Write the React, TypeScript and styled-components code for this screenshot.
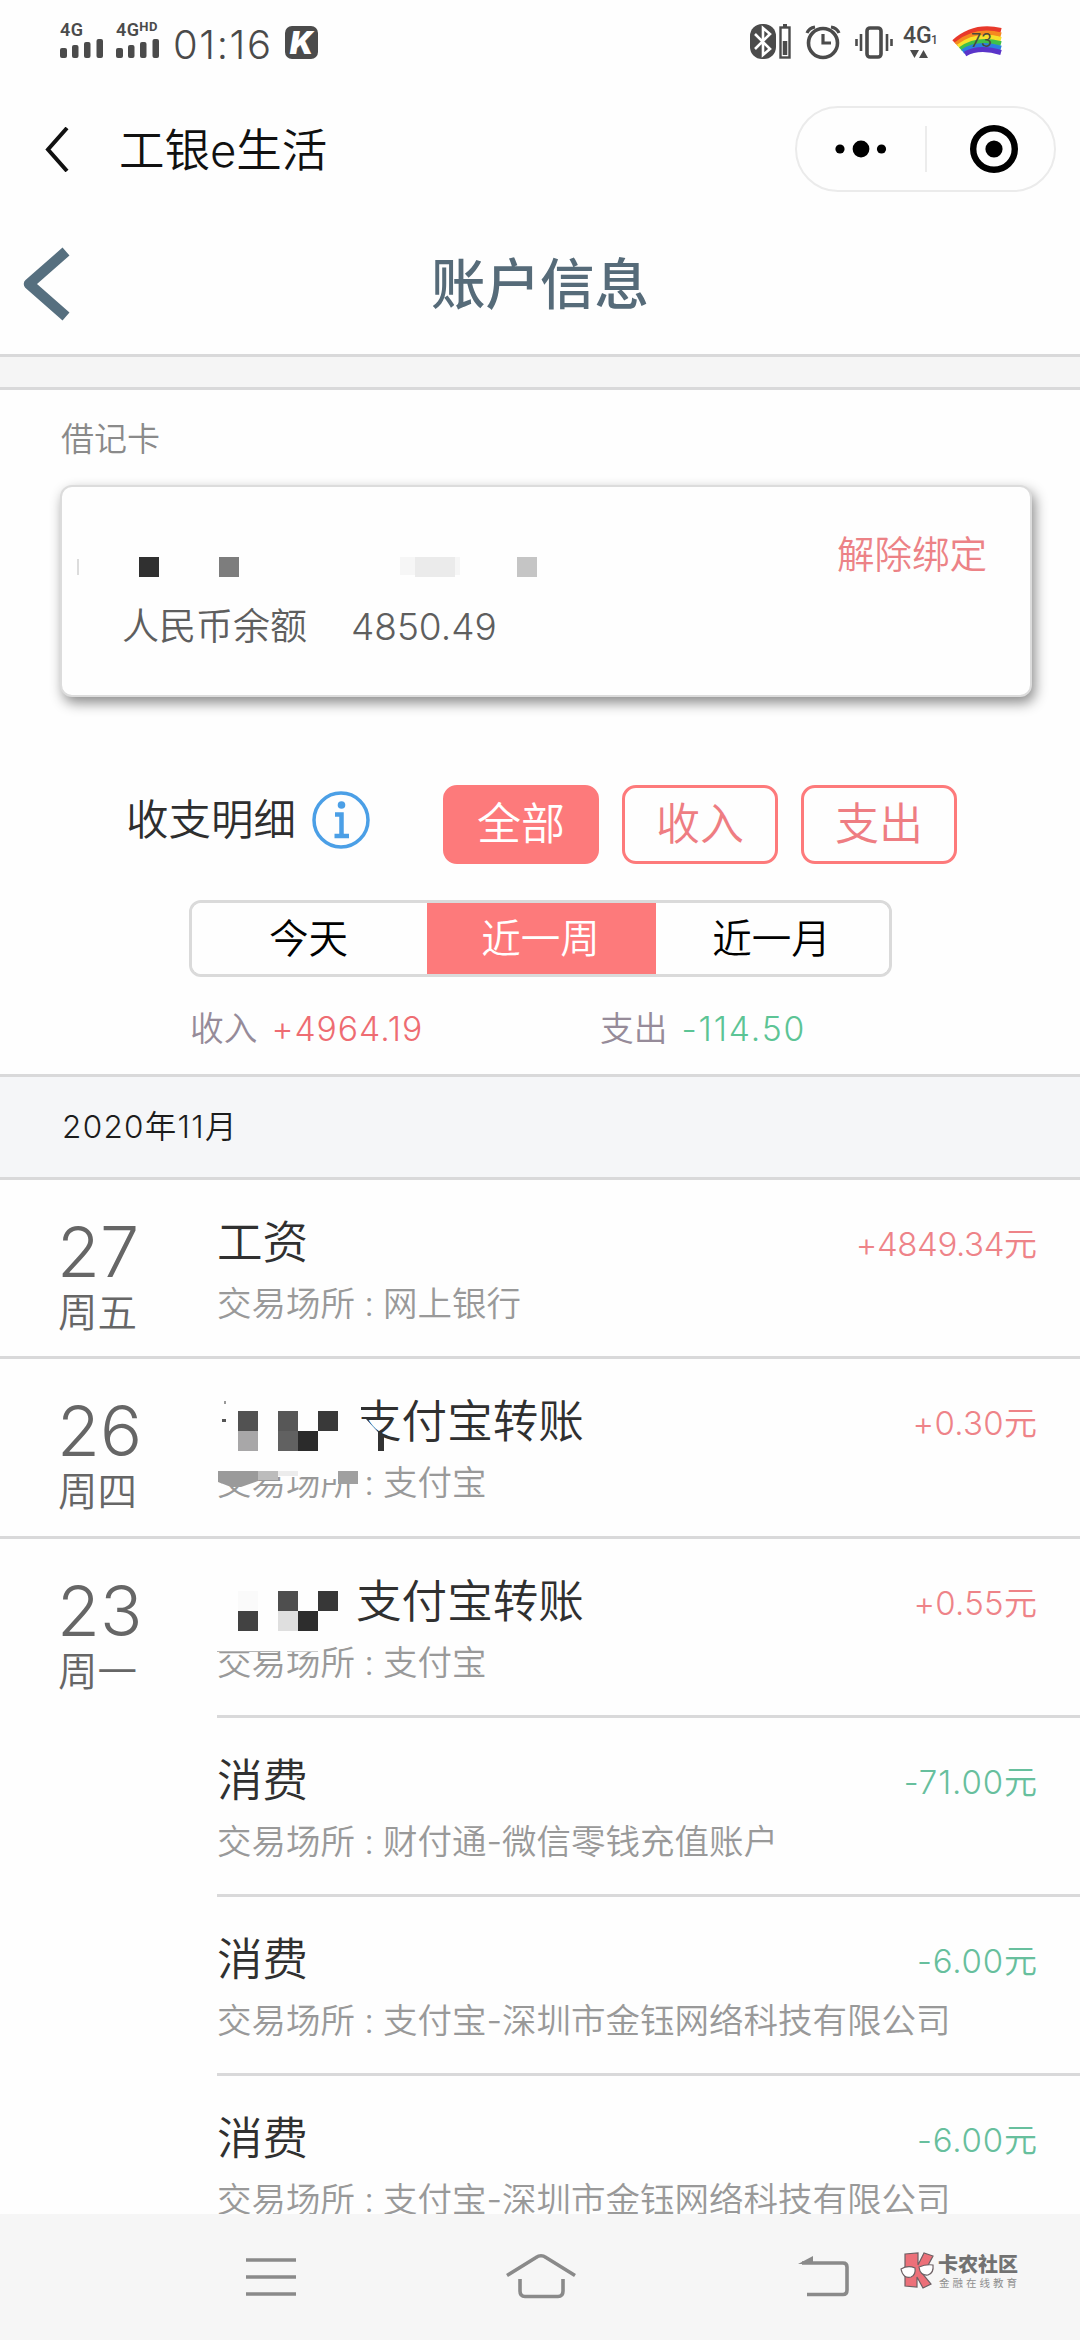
import React from "react";
import styled, { createGlobalStyle } from "styled-components";

const CORAL = "#fd7a7b";
const GREEN = "#5cc495";
const LINE = "#d9d9da";

const GlobalStyle = createGlobalStyle`
  * { box-sizing: border-box; }
  body {
    margin: 0;
    background: #fefefe;
    font-family: Inter, "Noto Sans CJK SC", sans-serif;
    font-weight: 350;
  }
`;

const Screen = styled.div`
  width: 1080px;
  height: 2340px;
  overflow: hidden;
  display: flex;
  flex-direction: column;
  background: #fefefe;
  white-space: nowrap;
`;

const StatusBar = styled.header`
  height: 80px;
  flex: none;
  display: flex;
  justify-content: space-between;
  padding: 20px 76px 0 60px;
`;

const StatusGroup = styled.div`
  display: flex;
  height: 42px;
`;

const SignalBox = styled.div<{ $w: number }>`
  width: ${(p) => p.$w}px;
  display: flex;
  flex-direction: column;
  color: #4b4b4b;
  font: 600 18px/19px Roboto, sans-serif;
  letter-spacing: 0.4px;
`;

const NetLabel = styled.span`
  display: flex;
  align-items: flex-start;
`;

const Hd = styled.span`
  font-size: 13px;
  line-height: 14px;
  font-weight: 700;
`;

const Clock = styled.span`
  font: 350 40px/50px Inter, sans-serif;
  color: #4a4a4a;
  width: 112px;
  letter-spacing: 1.6px;
`;

const AppBadge = styled.span`
  width: 33px;
  height: 33px;
  margin-top: 6px;
  border-radius: 7px;
  background: #4b4b4b;
  color: #fff;
  font: italic 900 31px/33px Inter, sans-serif;
  text-align: center;
`;

const MiniBar = styled.div`
  height: 142px;
  flex: none;
  display: flex;
  align-items: flex-start;
  padding: 26px 24px 0 45px;
`;

const MiniTitle = styled.h1`
  margin: 15px 0 0 50px;
  flex: 1;
  font-size: 45.5px;
  line-height: 60px;
  font-weight: 350;
  color: #111;
`;

const BackChevron = styled.svg`
  margin-top: 21px;
`;

const Capsule = styled.div`
  width: 261px;
  height: 86px;
  border: 2px solid #ebebeb;
  border-radius: 43px;
  display: flex;
  align-items: center;
`;

const CapsuleHalf = styled.div`
  flex: 1;
  display: flex;
  justify-content: center;
`;

const CloseIcon = styled.svg`
  margin-left: 7px;
`;

const CapsuleRule = styled.div`
  width: 2px;
  height: 46px;
  background: #ececec;
`;

const PageHeader = styled.div`
  height: 135px;
  flex: none;
  display: grid;
  grid-template-columns: 100px 1fr 100px;
  padding-top: 24px;
  border-bottom: 3px solid ${LINE};
`;

const PageTitle = styled.h2`
  margin: 0;
  text-align: center;
  color: #566b79;
  font-size: 54.5px;
  line-height: 76px;
  font-weight: 500;
`;

const PageBack = styled.svg`
  margin: 0 0 0 19px;
`;

const Spacer = styled.div`
  height: 33px;
  flex: none;
  background: #f5f5f5;
  border-bottom: 3px solid ${LINE};
`;

const Account = styled.section`
  flex: none;
  height: 394px;
  padding: 25px 48px 0 60px;
`;

const AccountType = styled.div`
  padding-left: 1px;
  font-size: 33px;
  line-height: 48px;
  color: #8a8a8a;
`;

const Card = styled.div`
  margin-top: 22px;
  height: 212px;
  border-radius: 12px;
  background: #fefefe;
  border: 2px solid #dcdcdc;
  box-shadow: 3px 6px 13px rgba(0, 0, 0, 0.45);
  display: flex;
  justify-content: space-between;
  padding: 0 43px 0 15px;
`;

const CardInfo = styled.div`
  display: flex;
  flex-direction: column;
`;

const CardNumber = styled.svg`
  margin-top: 65px;
`;

const Balance = styled.div`
  display: flex;
  gap: 44px;
  margin: 20px 0 0 45px;
  font-size: 37px;
  line-height: 50px;
  color: #5e5e5e;
`;

const Unbind = styled.span`
  margin-top: 43px;
  height: 50px;
  font-size: 37.5px;
  line-height: 50px;
  color: #ec8286;
`;

const Filters = styled.section`
  flex: none;
  height: 290px;
  display: flex;
  flex-direction: column;
`;

const KindRow = styled.div`
  height: 80px;
  display: flex;
  align-items: center;
  padding-left: 126px;
`;

const KindLabel = styled.span`
  width: 186px;
  font-size: 42.5px;
  line-height: 60px;
  margin-top: -8px;
  color: #2e2e2e;
`;

const InfoIcon = styled.svg`
  margin: -8px 73px 0 0;
`;

const KindGroup = styled.div`
  display: flex;
  gap: 23px;
`;

const KindButton = styled.button<{ $on?: boolean }>`
  width: 156px;
  height: 79px;
  padding: 0;
  border: 3px solid ${CORAL};
  border-radius: 14px;
  background: ${(p) => (p.$on ? CORAL : "#fefefe")};
  color: ${(p) => (p.$on ? "#fff" : "#ee7d82")};
  font: inherit;
  font-size: 44px;
  line-height: 73px;
`;

const RangeTabs = styled.div`
  margin: 36px 0 0 189px;
  width: 703px;
  height: 77px;
  display: grid;
  grid-template-columns: 235px 229px 1fr;
  border: 3px solid #dadada;
  border-radius: 12px;
  overflow: hidden;
`;

const RangeTab = styled.button<{ $on?: boolean }>`
  border: 0;
  padding: 0 2px 0 0;
  background: ${(p) => (p.$on ? CORAL : "#fefefe")};
  color: ${(p) => (p.$on ? "#fff" : "#000")};
  font: inherit;
  font-size: 39.5px;
  line-height: 70px;
`;

const Totals = styled.div`
  display: grid;
  grid-template-columns: 410px 1fr;
  margin: 27px 0 0 190px;
  font-size: 33.7px;
  line-height: 50px;
  color: #968b99;
`;

const Total = styled.span`
  display: flex;
  gap: 14px;
`;

const Figure = styled.span<{ $color: string; $track: number }>`
  color: ${(p) => p.$color};
  letter-spacing: ${(p) => p.$track}px;
`;

const MonthBar = styled.div`
  flex: none;
  height: 106px;
  padding: 25px 0 0 62px;
  border: solid ${LINE};
  border-width: 3px 0;
  background: #f5f6f8;
  font-size: 31.5px;
  line-height: 50px;
  letter-spacing: 1.3px;
  color: #1c1c1c;
`;

const History = styled.main`
  flex: 1;
  min-height: 0;
  overflow: hidden;
`;

const Day = styled.section`
  display: grid;
  grid-template-columns: 217px minmax(0, 1fr);
  border-bottom: 3px solid ${LINE};
`;

const DateCell = styled.div`
  padding: 37px 0 0 57px;
  color: #666;
`;

const DayNumber = styled.div`
  font-size: 70px;
  line-height: 70px;
  font-weight: 300;
`;

const Weekday = styled.div`
  font-size: 39.5px;
  line-height: 52px;
  padding-left: 1px;
`;

const Entry = styled.article`
  position: relative;
  height: 179.3px;
  display: flex;
  padding: 33px 43px 0 0;
  border-bottom: 3px solid ${LINE};
  &:last-child {
    height: 176.3px;
    border-bottom: 0;
  }
`;

const EntryText = styled.div`
  flex: 1;
  min-width: 0;
`;

const EntryTitle = styled.div<{ $indent?: number }>`
  padding-left: ${(p) => p.$indent ?? 0}px;
  font-size: 45.6px;
  line-height: 60px;
  color: #303030;
`;

const Place = styled.div`
  margin-top: 6px;
  font-size: 34.5px;
  line-height: 50px;
  color: #999;
`;

const Colon = styled.span`
  display: inline-block;
  width: 28px;
  text-align: center;
`;

const Amount = styled.div<{ $in: boolean; $track: number }>`
  flex: none;
  margin-top: 6px;
  font-size: 33px;
  line-height: 50px;
  height: 50px;
  color: ${(p) => (p.$in ? "#ee8388" : "#67bf9d")};
  letter-spacing: ${(p) => p.$track}px;
  margin-right: ${(p) => -p.$track}px;
`;

const Mosaic = styled.svg`
  position: absolute;
  left: 0;
  top: 30px;
`;

const SystemNav = styled.nav`
  flex: none;
  height: 126px;
  display: flex;
  align-items: flex-start;
  background: #f6f6f6;
  padding: 38px 61px 0 244px;
`;

const NavIcon = styled.svg<{ $gap: number }>`
  flex: none;
  margin-right: ${(p) => p.$gap}px;
`;

const Brand = styled.div`
  display: flex;
  gap: 3px;
`;

const BrandName = styled.div`
  font: 900 20px/24px "Noto Sans CJK SC", sans-serif;
  color: #727272;
`;

const BrandSub = styled.div`
  font: 400 10.5px/13px "Noto Sans CJK SC", sans-serif;
  letter-spacing: 3px;
  color: #8f8f8f;
  padding-left: 1px;
`;

type Block = [number, number, number, number, string];

type Item = {
  title: string;
  place: string;
  amount: string;
  track: number;
  mosaic?: "first" | "second";
};

const days: { day: string; week: string; items: Item[] }[] = [
  {
    day: "27",
    week: "周五",
    items: [{ title: "工资", place: "网上银行", amount: "+4849.34元", track: -0.4 }],
  },
  {
    day: "26",
    week: "周四",
    items: [{ title: "支付宝转账", place: "支付宝", amount: "+0.30元", track: 0.3, mosaic: "first" }],
  },
  {
    day: "23",
    week: "周一",
    items: [
      { title: "支付宝转账", place: "支付宝", amount: "+0.55元", track: 0.3, mosaic: "second" },
      { title: "消费", place: "财付通-微信零钱充值账户", amount: "-71.00元", track: 0.9 },
      { title: "消费", place: "支付宝-深圳市金钰网络科技有限公司", amount: "-6.00元", track: 0.8 },
      { title: "消费", place: "支付宝-深圳市金钰网络科技有限公司", amount: "-6.00元", track: 0.8 },
    ],
  },
];

const mosaicBlocks: Record<"first" | "second", Block[]> = {
  first: [
    [21, 22, 20, 20, "#525252"],
    [21, 42, 20, 20, "#a8a7a8"],
    [61, 22, 20, 20, "#575757"],
    [61, 42, 20, 20, "#616161"],
    [81, 42, 20, 20, "#2b2b2b"],
    [101, 22, 20, 20, "#393939"],
    [5, 30, 4, 3, "#555"],
    [7, 12, 2, 3, "#999"],
    [0, 74, 110, 14, "#fefefe"],
    [105, 74, 40, 16, "#fefefe"],
    [41, 82, 20, 9, "#bcbcbc"],
    [61, 82, 20, 5, "#ececec"],
    [121, 82, 20, 13, "#a0a0a0"],
  ],
  second: [
    [21, 22, 20, 20, "#fafafa"],
    [21, 42, 20, 20, "#424242"],
    [61, 22, 20, 20, "#4e4e4e"],
    [61, 42, 20, 20, "#dfdfdf"],
    [81, 42, 20, 20, "#2d2d2d"],
    [101, 22, 20, 20, "#373737"],
    [0, 72, 101, 10, "#fefefe"],
    [0, 82, 62, 1, "#b5b5b5"],
    [70, 82, 31, 1, "#ccc"],
  ],
};

const Bars = () => (
  <svg width="44" height="20" fill="#4b4b4b">
    <rect x="0" y="9" width="7" height="10" rx="2" />
    <rect x="12" y="6" width="6.500" height="13" rx="2" />
    <rect x="24" y="3" width="6.500" height="16" rx="2" />
    <rect x="36.500" y="0" width="6.500" height="19" rx="2" />
  </svg>
);

const rainbow = ["#e8392b", "#f58a1f", "#f7e12b", "#3fc04a", "#2b7fe0", "#5a34c9"];

const StatusIcons = () => (
  <svg width="254" height="42" viewBox="750 20 254 42" fill="none" stroke="#4b4b4b">
    <rect x="750" y="24" width="26" height="35" rx="12" fill="#4b4b4b" stroke="none" />
    <path d="M755 34L770 49L763 55V28L770 34L755 49" stroke="#fff" strokeWidth="2.6" />
    <rect x="780.5" y="27.5" width="9" height="30" strokeWidth="2.4" />
    <path d="M783 25.5H787" strokeWidth="3" />
    <path d="M785 41V55" strokeWidth="4.5" />
    <circle cx="823" cy="43" r="14.5" strokeWidth="3.6" />
    <path d="M823 34V43H831M807 33Q809 28 815 27M839 33Q837 28 831 27" strokeWidth="3.2" />
    <rect x="867" y="28" width="14" height="29" rx="3" strokeWidth="3.6" />
    <path d="M861 34V51M856.5 39V46M887 34V51M891.5 39V46" strokeWidth="2.6" />
    <text x="903" y="43" fill="#4b4b4b" stroke="none" fontFamily="Roboto" fontSize="23" fontWeight="500">
      4G
    </text>
    <text x="931" y="44" fill="#4b4b4b" stroke="none" fontFamily="Roboto" fontSize="12" fontWeight="500">
      1
    </text>
    <path d="M910 50H919L914.500 58ZM919 58H928L923.500 50Z" fill="#4b4b4b" stroke="none" />
    {rainbow.map((c, i) => (
      <path
        key={c}
        d={`M${954 + i * 2.2} ${42 + i * 2.4}Q${974 + i} ${24 + i * 4.4} 1001 ${30.5 + i * 4.4}`}
        stroke={c}
        strokeWidth="5"
      />
    ))}
    <text x="971" y="47" fill="#4a4a3c" stroke="none" fontFamily="Inter" fontSize="18" fontWeight="400">
      73
    </text>
  </svg>
);

const EntryMosaic = ({ kind }: { kind: "first" | "second" }) => (
  <Mosaic width="180" height="110">
    {mosaicBlocks[kind].map(([x, y, w, h, fill], i) => (
      <rect key={i} x={x} y={y} width={w} height={h} fill={fill} />
    ))}
    {kind === "first" && (
      <>
        <path d="M1 82H41V92L24 98H14L1 93Z" fill="#9a9a9a" />
        <path d="M138 12H144V30H149L161 43V62H138Z" fill="#fefefe" />
        <path d="M161 42L167 46V62H161Z" fill="#333" />
      </>
    )}
  </Mosaic>
);

export default function App() {
  return (
    <Screen>
      <GlobalStyle />
      <StatusBar>
        <StatusGroup>
          <SignalBox $w={56}>
            <NetLabel>4G</NetLabel>
            <Bars />
          </SignalBox>
          <SignalBox $w={57}>
            <NetLabel>
              4G<Hd>HD</Hd>
            </NetLabel>
            <Bars />
          </SignalBox>
          <Clock>01:16</Clock>
          <AppBadge>K</AppBadge>
        </StatusGroup>
        <StatusGroup>
          <StatusIcons />
        </StatusGroup>
      </StatusBar>

      <MiniBar>
        <BackChevron width="24" height="45" fill="none" stroke="#111" strokeWidth="4">
          <path d="M22 1L3 22.500L22 44" />
        </BackChevron>
        <MiniTitle>工银e生活</MiniTitle>
        <Capsule>
          <CapsuleHalf>
            <svg width="52" height="20">
              <circle cx="5" cy="10" r="4.6" />
              <circle cx="26" cy="10" r="8.4" />
              <circle cx="46.500" cy="10" r="4.6" />
            </svg>
          </CapsuleHalf>
          <CapsuleRule />
          <CapsuleHalf>
            <CloseIcon width="50" height="50">
              <circle cx="25" cy="25" r="20.800" fill="none" stroke="#000" strokeWidth="6.400" />
              <circle cx="25" cy="25" r="8.600" />
            </CloseIcon>
          </CapsuleHalf>
        </Capsule>
      </MiniBar>

      <PageHeader>
        <PageBack width="54" height="76" fill="none" stroke="#566f7f" strokeWidth="10.500" strokeLinejoin="round">
          <path d="M47 5.500L10 38L47 70.500" />
        </PageBack>
        <PageTitle>账户信息</PageTitle>
      </PageHeader>
      <Spacer />

      <Account>
        <AccountType>借记卡</AccountType>
        <Card>
          <CardInfo>
            <CardNumber width="480" height="30">
              <rect x="0" y="7" width="2" height="16" fill="#dcdcdc" />
              <rect x="62" y="5" width="20" height="20" fill="#303030" />
              <rect x="142" y="5" width="20" height="20" fill="#7d7d7d" />
              <rect x="323" y="5" width="60" height="18" fill="#f6f6f6" />
              <rect x="338" y="5" width="40" height="20" fill="#ebebeb" />
              <rect x="440" y="5" width="20" height="20" fill="#c5c5c5" />
            </CardNumber>
            <Balance>
              <span>人民币余额</span>
              <span>4850.49</span>
            </Balance>
          </CardInfo>
          <Unbind>解除绑定</Unbind>
        </Card>
      </Account>

      <Filters>
        <KindRow>
          <KindLabel>收支明细</KindLabel>
          <InfoIcon width="58" height="58" fill="none" stroke="#4b9fe6" strokeWidth="3.5">
            <circle cx="29" cy="29" r="27" />
            <circle cx="29.500" cy="14" r="3.800" fill="#4b9fe6" stroke="none" />
            <path d="M23 23.500H29.500V44M22.500 45H37" strokeWidth="4.500" />
          </InfoIcon>
          <KindGroup>
            <KindButton $on>全部</KindButton>
            <KindButton>收入</KindButton>
            <KindButton>支出</KindButton>
          </KindGroup>
        </KindRow>
        <RangeTabs>
          <RangeTab>今天</RangeTab>
          <RangeTab $on>近一周</RangeTab>
          <RangeTab>近一月</RangeTab>
        </RangeTabs>
        <Totals>
          <Total>
            收入
            <Figure $color="#ee6c72" $track={1}>
              +4964.19
            </Figure>
          </Total>
          <Total>
            支出
            <Figure $color={GREEN} $track={1.9}>
              -114.50
            </Figure>
          </Total>
        </Totals>
      </Filters>

      <MonthBar>2020年11月</MonthBar>
      <History>
        {days.map((d) => (
          <Day key={d.day}>
            <DateCell>
              <DayNumber>{d.day}</DayNumber>
              <Weekday>{d.week}</Weekday>
            </DateCell>
            <div>
              {d.items.map((it, i) => (
                <Entry key={i}>
                  <EntryText>
                    <EntryTitle $indent={it.mosaic ? 139 : 0}>{it.title}</EntryTitle>
                    <Place>
                      交易场所<Colon>:</Colon>
                      {it.place}
                    </Place>
                  </EntryText>
                  <Amount $in={it.amount[0] === "+"} $track={it.track}>
                    {it.amount}
                  </Amount>
                  {it.mosaic && <EntryMosaic kind={it.mosaic} />}
                </Entry>
              ))}
            </div>
          </Day>
        ))}
      </History>

      <SystemNav>
        <NavIcon $gap={208} width="54" height="50" stroke="#8a8a8a" strokeWidth="3.6">
          <path d="M2 8H52M2 25H52M2 42H52" />
        </NavIcon>
        <NavIcon $gap={220} width="72" height="50" fill="none" stroke="#8a8a8a" strokeWidth="3.6">
          <path d="M1 23.500L30 5.500Q35 2 40 5.500L69 23.500" />
          <path d="M14 27V39Q14 44.500 19 44.500H52Q57 44.500 57 39V27" />
        </NavIcon>
        <NavIcon $gap={50} width="52" height="50" fill="none" stroke="#8a8a8a" strokeWidth="3.6">
          <path d="M4 11H45Q49 11 49 15V38Q49 42.500 45 42.500H9" />
          <path d="M0 12L15 4V12Z" fill="#8a8a8a" stroke="none" />
        </NavIcon>
        <Brand>
          <svg width="35" height="38" stroke="#6d6064" strokeWidth="1.200">
            <path d="M5 2L18 1L18 13L24 1L33 4L26 17L21 20L31 32L23 36L17 25V35L5 34Z" fill="#ec7079" />
            <path d="M1 17Q8 13 15 16Q16 23 11 25Q3 27 1 17Z" fill="#fff" />
            <path d="M19 15Q26 12 33 13Q34 21 28 23Q20 24 19 15Z" fill="#fff" />
          </svg>
          <div>
            <BrandName>卡农社区</BrandName>
            <BrandSub>金融在线教育</BrandSub>
          </div>
        </Brand>
      </SystemNav>
    </Screen>
  );
}
